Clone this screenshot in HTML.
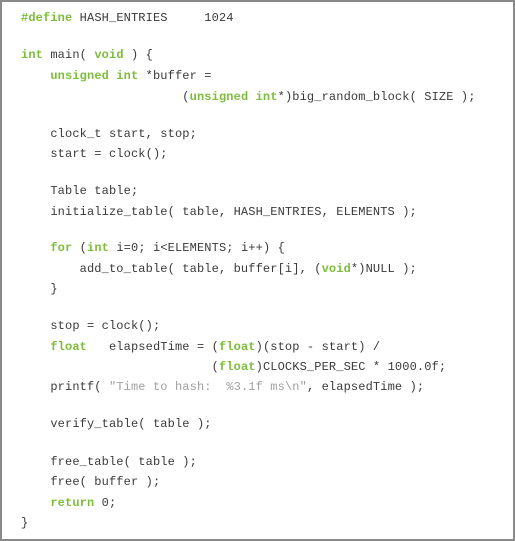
<!DOCTYPE html>
<html><head><style>
html,body{margin:0;padding:0;background:#fff;}
.box{position:absolute;left:0;top:0;width:511px;height:537px;border:2px solid #8a8a8a;background:#fff;}
.l{position:absolute;left:21px;font-family:"Liberation Mono",monospace;font-size:12px;letter-spacing:0.13px;line-height:16px;color:#3a3a3a;white-space:pre;}
.k{color:#7dbd3a;font-weight:bold;}
.s{color:#a0a0a0;}
</style></head><body>
<div class="box"></div>
<div class="l" style="top:10px"><span class="k">#define</span> HASH_ENTRIES     1024</div>
<div class="l" style="top:47px"><span class="k">int</span> main( <span class="k">void</span> ) {</div>
<div class="l" style="top:68px">    <span class="k">unsigned int</span> *buffer =</div>
<div class="l" style="top:89px">                      (<span class="k">unsigned int</span>*)big_random_block( SIZE );</div>
<div class="l" style="top:126px">    clock_t start, stop;</div>
<div class="l" style="top:146px">    start = clock();</div>
<div class="l" style="top:183px">    Table table;</div>
<div class="l" style="top:204px">    initialize_table( table, HASH_ENTRIES, ELEMENTS );</div>
<div class="l" style="top:240px">    <span class="k">for</span> (<span class="k">int</span> i=0; i&lt;ELEMENTS; i++) {</div>
<div class="l" style="top:261px">        add_to_table( table, buffer[i], (<span class="k">void</span>*)NULL );</div>
<div class="l" style="top:281px">    }</div>
<div class="l" style="top:318px">    stop = clock();</div>
<div class="l" style="top:339px">    <span class="k">float</span>   elapsedTime = (<span class="k">float</span>)(stop - start) /</div>
<div class="l" style="top:359px">                          (<span class="k">float</span>)CLOCKS_PER_SEC * 1000.0f;</div>
<div class="l" style="top:379px">    printf( <span class="s">"Time to hash:  %3.1f ms\n"</span>, elapsedTime );</div>
<div class="l" style="top:416px">    verify_table( table );</div>
<div class="l" style="top:454px">    free_table( table );</div>
<div class="l" style="top:474px">    free( buffer );</div>
<div class="l" style="top:495px">    <span class="k">return</span> 0;</div>
<div class="l" style="top:515px">}</div>
</body></html>
